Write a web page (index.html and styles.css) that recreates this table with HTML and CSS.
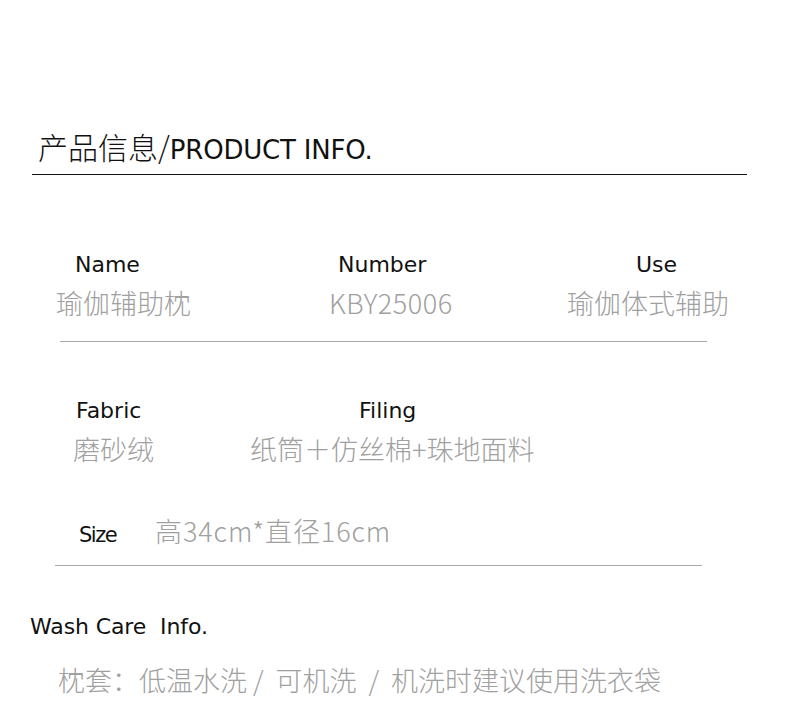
FILE: index.html
```html
<!DOCTYPE html>
<html lang="zh-CN">

<head>
  <meta charset="UTF-8">
  <title>产品信息</title>
  <link rel="stylesheet" href="styles.css">
</head>

<body>
  <div class="info-page">
    <!-- 标题 -->
    <h1 class="info-title"><span class="info-title-cn">产品信息/</span><span class="info-title-en">PRODUCT INFO.</span></h1>

    <!-- 第一行 -->
    <div class="info-row info-row-first">
      <div class="info-cell cell-name">
        <div class="info-label">Name</div>
        <div class="info-value">瑜伽辅助枕</div>
      </div>
      <div class="info-cell cell-number">
        <div class="info-label">Number</div>
        <div class="info-value info-code">KBY25006</div>
      </div>
      <div class="info-cell cell-use">
        <div class="info-label">Use</div>
        <div class="info-value">瑜伽体式辅助</div>
      </div>
    </div>

    <!-- 第二行 -->
    <div class="info-row info-row-second">
      <div class="info-cell cell-fabric">
        <div class="info-label">Fabric</div>
        <div class="info-value">磨砂绒</div>
      </div>
      <div class="info-cell cell-filing">
        <div class="info-label">Filing</div>
        <div class="info-value">纸筒＋仿丝棉+珠地面料</div>
      </div>
    </div>

    <!-- 尺寸 -->
    <div class="info-size">
      <span class="info-size-label">Size</span>
      <span class="info-value info-size-value">高34cm*直径16cm</span>
    </div>

    <!-- 洗涤 -->
    <div class="wash-title">Wash Care&nbsp; Info.</div>
    <div class="info-value wash-text">枕套：低温水洗 /&nbsp; 可机洗&nbsp; /&nbsp; 机洗时建议使用洗衣袋</div>
  </div>
</body>

</html>
```

FILE: styles.css
```css
body {
  margin: 0;
  padding: 0;
  background: #fff;
}

.info-page {
  width: 790px;
  height: 707px;
  overflow: hidden;
  padding-top: 126px;
  box-sizing: border-box;
  font-family: 'DejaVu Sans', sans-serif;
  color: #111;
}

/* 标题 */
.info-title {
  margin: 0 43px 0 32px;
  padding: 0 0 4px 6px;
  border-bottom: 1px solid #111;
  font-weight: normal;
  line-height: 40px;
  white-space: nowrap;
}

.info-title-cn {
  font-family: 'Noto Sans CJK SC', sans-serif;
  font-size: 30px;
  font-weight: 300;
}

.info-title-en {
  font-family: 'DejaVu Sans', sans-serif;
  font-size: 26px;
  letter-spacing: -0.2px;
}

/* 行 */
.info-row {
  display: flex;
}

.info-row-first {
  margin: 77px 83px 0 60px;
  padding-bottom: 20px;
  border-bottom: 1px solid #aaa;
}

.info-row-second {
  margin: 56px 0 0 73px;
}

.info-cell {
  display: flex;
  flex-direction: column;
  flex-shrink: 0;
}

.info-label {
  font-size: 22px;
  line-height: 26px;
  margin-bottom: 7px;
  color: #111;
}

.info-value {
  font-family: 'Noto Sans CJK SC', sans-serif;
  font-size: 27px;
  font-weight: 200;
  line-height: 36px;
  color: #a0a0a0;
  white-space: nowrap;
}

.info-code {
  letter-spacing: 0.5px;
}

.cell-name {
  width: 269px;
}

.cell-name .info-label {
  padding-left: 15px;
}

.cell-name .info-value {
  margin-left: -4px;
}

.cell-number {
  width: 238px;
}

.cell-number .info-label {
  padding-left: 9px;
}

.cell-use .info-label {
  padding-left: 69px;
}

.cell-fabric {
  width: 177px;
}

.cell-fabric .info-label {
  padding-left: 3px;
}

.cell-filing .info-label {
  padding-left: 109px;
}

/* 尺寸 */
.info-size {
  display: flex;
  align-items: baseline;
  margin: 46px 88px 0 55px;
  padding: 0 0 16px 24px;
  border-bottom: 1px solid #aaa;
}

.info-size-label {
  font-size: 21px;
  letter-spacing: -1.5px;
  width: 76px;
}

.info-size-value {
  letter-spacing: 0.9px;
}

/* 洗涤 */
.wash-title {
  margin: 48px 0 0 30px;
  font-size: 22px;
  letter-spacing: -0.1px;
  line-height: 26px;
}

.wash-text {
  margin: 22px 0 0 58px;
}
```
